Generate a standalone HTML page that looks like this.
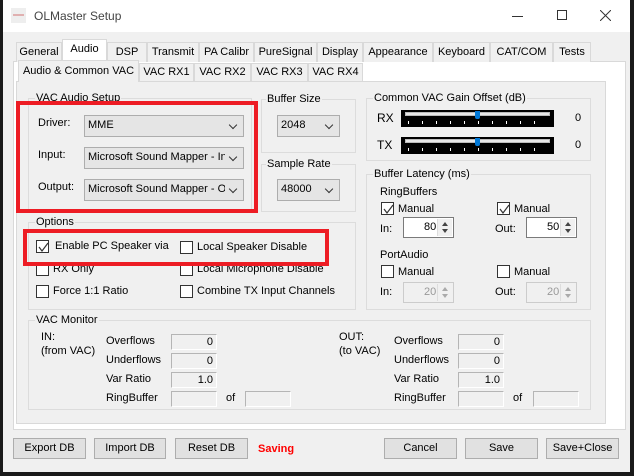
<!DOCTYPE html>
<html><head><meta charset="utf-8"><style>
*{box-sizing:border-box}
body{margin:0;width:634px;height:476px;overflow:hidden;background:#1a1a1a;font-family:"Liberation Sans",Arial,sans-serif;font-size:11px;color:#000;position:relative}
.a{position:absolute}
.t{position:absolute;white-space:nowrap;font-size:11px;line-height:14px}
.grp{position:absolute;border:1px solid #dcdcdc}
.gt{position:absolute;top:-8px;left:6px;background:#f0f0f0;padding:0 1px;white-space:nowrap;line-height:14px}
.cb{position:absolute;border:1px solid #333;background:#fff;width:13px;height:13px}
.cb svg{position:absolute;left:1px;top:1px}
.combo{position:absolute;background:#e5e5e5;border:1px solid #adadad;padding:3px 0 0 3px;white-space:nowrap;overflow:hidden}
.combo span{display:block;overflow:hidden;width:calc(100% - 18px)}
.combo:after{content:"";position:absolute;right:7px;top:6px;width:5px;height:5px;border-right:1px solid #333;border-bottom:1px solid #333;transform:rotate(45deg)}
.tab{position:absolute;top:42px;height:20px;border:1px solid #d9d9d9;border-bottom:none;background:#f0f0f0;text-align:center;line-height:18px;white-space:nowrap}
.itab{position:absolute;top:63px;height:18px;border:1px solid #d9d9d9;border-bottom:none;background:#f0f0f0;text-align:center;line-height:17px;white-space:nowrap}
.box{position:absolute;background:#f0f0f0;border:1px solid #b5b5b5;border-right-color:#fff;border-bottom-color:#fff;text-align:right;padding-right:3px;line-height:14px}
.spin{position:absolute;background:#fff;border:1px solid #7a7a7a;width:51px;height:21px;line-height:19px;padding-left:20px}
.spin.d{background:#f0f0f0;border-color:#ccc;color:#999}
.spin i{position:absolute;right:1px;top:1px;width:15px;height:17px;border-left:1px solid #ddd;background:#f0f0f0}
.spin i:before{content:"";position:absolute;left:4px;top:3px;border:3px solid transparent;border-bottom:4px solid #444;border-top:none}
.spin i:after{content:"";position:absolute;left:4px;top:10px;border:3px solid transparent;border-top:4px solid #444;border-bottom:none}
.spin.d i:before{border-bottom-color:#aaa}.spin.d i:after{border-top-color:#aaa}
.btn{position:absolute;top:438px;height:21px;background:#e1e1e1;border:1px solid #adadad;text-align:center;line-height:19px;white-space:nowrap}
.sl{position:absolute;left:401px;width:153px;height:17px;background:#000}
.sl .tr{position:absolute;left:4px;top:2px;width:145px;height:4px;background:#e7e7e7;border:1px solid #bbb}
.sl .th{position:absolute;left:74px;top:1px;width:5px;height:8px;background:#0078d7;border-radius:0 0 2px 2px}
.sl .tk{position:absolute;left:7px;top:11px;width:140px;height:3px;background:repeating-linear-gradient(90deg,#fff 0 1px,transparent 1px 14px)}
.red{position:absolute;border:4px solid #ed1c24}
</style></head><body>
<div class="a" style="left:3px;top:0;width:627px;height:472px;background:#f0f0f0"></div>
<div class="a" style="left:3px;top:0;width:627px;height:32px;background:#fff"></div>
<div class="a" style="left:11px;top:8px;width:15px;height:15px;background:#eee"></div>
<div class="a" style="left:13px;top:14px;width:11px;height:2px;background:#e0b0b0"></div>
<div class="t" style="left:34px;top:9px;font-size:12px;color:#444">OLMaster Setup</div>
<div class="a" style="left:512px;top:16px;width:11px;height:1px;background:#333"></div>
<div class="a" style="left:557px;top:10px;width:10px;height:10px;border:1px solid #333"></div>
<svg class="a" style="left:600px;top:10px" width="11" height="11"><path d="M0 0L11 11M11 0L0 11" stroke="#333" stroke-width="1"/></svg>

<div class="a" style="left:13px;top:61px;width:613px;height:369px;border:1px solid #d9d9d9;background:#fff"></div>
<div class="tab" style="left:16px;width:46px">General</div>
<div class="tab" style="left:62px;top:39px;height:24px;width:45px;background:#fff;z-index:2">Audio</div>
<div class="tab" style="left:107px;width:40px">DSP</div>
<div class="tab" style="left:147px;width:52px">Transmit</div>
<div class="tab" style="left:199px;width:55px">PA Calibr</div>
<div class="tab" style="left:254px;width:63px">PureSignal</div>
<div class="tab" style="left:317px;width:46px">Display</div>
<div class="tab" style="left:363px;width:70px">Appearance</div>
<div class="tab" style="left:433px;width:57px">Keyboard</div>
<div class="tab" style="left:490px;width:63px">CAT/COM</div>
<div class="tab" style="left:553px;width:38px">Tests</div>

<div class="a" style="left:16px;top:81px;width:590px;height:343px;border:1px solid #d9d9d9;background:#f0f0f0"></div>
<div class="itab" style="left:18px;top:60px;height:22px;width:121px;background:#f0f0f0;z-index:2;line-height:21px">Audio &amp; Common VAC</div>
<div class="itab" style="left:139px;width:55px">VAC RX1</div>
<div class="itab" style="left:194px;width:57px">VAC RX2</div>
<div class="itab" style="left:251px;width:57px">VAC RX3</div>
<div class="itab" style="left:308px;width:55px">VAC RX4</div>

<div class="grp" style="left:28px;top:98px;width:224px;height:114px"><div class="gt">VAC Audio Setup</div></div>
<div class="t" style="left:38px;top:116px">Driver:</div>
<div class="combo" style="left:84px;top:115px;width:160px;height:22px"><span>MME</span></div>
<div class="t" style="left:38px;top:148px">Input:</div>
<div class="combo" style="left:84px;top:147px;width:160px;height:22px"><span>Microsoft Sound Mapper - Input</span></div>
<div class="t" style="left:38px;top:180px">Output:</div>
<div class="combo" style="left:84px;top:179px;width:160px;height:22px"><span>Microsoft Sound Mapper - Output</span></div>
<div class="red" style="left:16px;top:101px;width:242px;height:112px"></div>

<div class="grp" style="left:261px;top:99px;width:95px;height:54px"><div class="gt" style="left:4px">Buffer Size</div></div>
<div class="combo" style="left:277px;top:115px;width:63px;height:22px"><span>2048</span></div>
<div class="grp" style="left:261px;top:164px;width:95px;height:48px"><div class="gt" style="left:4px">Sample Rate</div></div>
<div class="combo" style="left:277px;top:179px;width:63px;height:22px"><span>48000</span></div>

<div class="grp" style="left:366px;top:98px;width:225px;height:63px"><div class="gt">Common VAC Gain Offset (dB)</div></div>
<div class="t" style="left:377px;top:111px;font-size:12px">RX</div>
<div class="sl" style="top:110px"><div class="tr"></div><div class="th"></div><div class="tk"></div></div>
<div class="t" style="left:575px;top:111px">0</div>
<div class="t" style="left:377px;top:138px;font-size:12px">TX</div>
<div class="sl" style="top:137px"><div class="tr"></div><div class="th"></div><div class="tk"></div></div>
<div class="t" style="left:575px;top:138px">0</div>

<div class="grp" style="left:366px;top:174px;width:225px;height:136px"><div class="gt">Buffer Latency (ms)</div></div>
<div class="t" style="left:380px;top:185px">RingBuffers</div>
<div class="cb" style="left:381px;top:202px"><svg width="11" height="11"><path d="M1 5 L4 9 L10 1" stroke="#333" fill="none" stroke-width="1.2"/></svg></div>
<div class="t" style="left:398px;top:202px">Manual</div>
<div class="cb" style="left:497px;top:202px"><svg width="11" height="11"><path d="M1 5 L4 9 L10 1" stroke="#333" fill="none" stroke-width="1.2"/></svg></div>
<div class="t" style="left:514px;top:202px">Manual</div>
<div class="t" style="left:380px;top:222px">In:</div>
<div class="spin" style="left:403px;top:217px">80<i></i></div>
<div class="t" style="left:495px;top:222px">Out:</div>
<div class="spin" style="left:526px;top:217px">50<i></i></div>
<div class="t" style="left:380px;top:248px">PortAudio</div>
<div class="cb" style="left:381px;top:265px"></div>
<div class="t" style="left:398px;top:265px">Manual</div>
<div class="cb" style="left:497px;top:265px"></div>
<div class="t" style="left:514px;top:265px">Manual</div>
<div class="t" style="left:380px;top:285px">In:</div>
<div class="spin d" style="left:403px;top:282px">20<i></i></div>
<div class="t" style="left:495px;top:285px">Out:</div>
<div class="spin d" style="left:526px;top:282px">20<i></i></div>

<div class="grp" style="left:28px;top:222px;width:328px;height:88px"><div class="gt">Options</div></div>
<div class="cb" style="left:36px;top:240px"><svg width="11" height="11"><path d="M1 5 L4 9 L10 1" stroke="#333" fill="none" stroke-width="1.2"/></svg></div>
<div class="t" style="left:55px;top:239px">Enable PC Speaker via</div>
<div class="cb" style="left:180px;top:241px"></div>
<div class="t" style="left:197px;top:240px">Local Speaker Disable</div>
<div class="cb" style="left:36px;top:263px"></div>
<div class="t" style="left:53px;top:262px">RX Only</div>
<div class="cb" style="left:180px;top:263px"></div>
<div class="t" style="left:197px;top:262px">Local Microphone Disable</div>
<div class="cb" style="left:36px;top:285px"></div>
<div class="t" style="left:53px;top:284px">Force 1:1 Ratio</div>
<div class="cb" style="left:180px;top:285px"></div>
<div class="t" style="left:197px;top:284px">Combine TX Input Channels</div>
<div class="red" style="left:23px;top:229px;width:306px;height:37px"></div>

<div class="grp" style="left:28px;top:320px;width:563px;height:90px"><div class="gt">VAC Monitor</div></div>
<div class="t" style="left:41px;top:330px">IN:<br>(from VAC)</div>
<div class="t" style="left:106px;top:334px">Overflows</div><div class="box" style="left:171px;top:334px;width:46px;height:16px">0</div>
<div class="t" style="left:106px;top:353px">Underflows</div><div class="box" style="left:171px;top:353px;width:46px;height:16px">0</div>
<div class="t" style="left:106px;top:372px">Var Ratio</div><div class="box" style="left:171px;top:372px;width:46px;height:16px">1.0</div>
<div class="t" style="left:106px;top:391px">RingBuffer</div><div class="box" style="left:171px;top:391px;width:46px;height:16px"></div>
<div class="t" style="left:226px;top:391px">of</div><div class="box" style="left:245px;top:391px;width:46px;height:16px"></div>
<div class="t" style="left:339px;top:330px">OUT:<br>(to VAC)</div>
<div class="t" style="left:394px;top:334px">Overflows</div><div class="box" style="left:458px;top:334px;width:46px;height:16px">0</div>
<div class="t" style="left:394px;top:353px">Underflows</div><div class="box" style="left:458px;top:353px;width:46px;height:16px">0</div>
<div class="t" style="left:394px;top:372px">Var Ratio</div><div class="box" style="left:458px;top:372px;width:46px;height:16px">1.0</div>
<div class="t" style="left:394px;top:391px">RingBuffer</div><div class="box" style="left:458px;top:391px;width:46px;height:16px"></div>
<div class="t" style="left:513px;top:391px">of</div><div class="box" style="left:533px;top:391px;width:46px;height:16px"></div>

<div class="btn" style="left:13px;width:73px">Export DB</div>
<div class="btn" style="left:94px;width:72px">Import DB</div>
<div class="btn" style="left:175px;width:73px">Reset DB</div>
<div class="t" style="left:258px;top:442px;color:#f00;font-weight:bold">Saving</div>
<div class="btn" style="left:384px;width:73px">Cancel</div>
<div class="btn" style="left:465px;width:73px">Save</div>
<div class="btn" style="left:546px;width:73px">Save+Close</div>
</body></html>
